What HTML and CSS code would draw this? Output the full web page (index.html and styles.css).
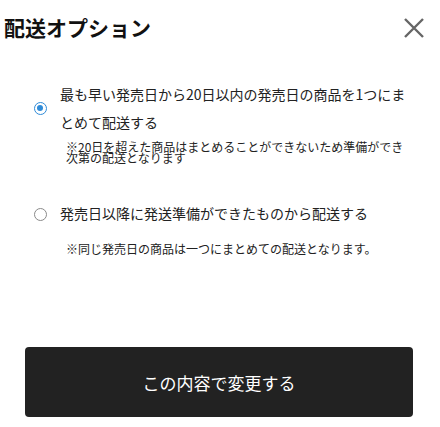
FILE: index.html
```html
<!DOCTYPE html>
<html lang="ja">
<head>
<meta charset="utf-8">
<title>配送オプション</title>
<link rel="stylesheet" href="styles.css">
</head>
<body>
<div class="modal">
  <header class="header">
    <h1 class="title">配送オプション</h1>
    <button class="close" aria-label="閉じる">
      <svg width="22" height="20" viewBox="0 0 22 20"><path d="M2 1 L20 19 M20 1 L2 19" stroke="#666" stroke-width="2.4" fill="none"/></svg>
    </button>
  </header>
  <div class="options">
    <div class="option first">
      <span class="radio checked"></span>
      <p class="label">最も早い発売日から20日以内の発売日の商品を1つにまとめて配送する</p>
      <p class="note tight">※20日を超えた商品はまとめることができないため準備ができ次第の配送となります</p>
    </div>
    <div class="option second">
      <span class="radio"></span>
      <p class="label">発売日以降に発送準備ができたものから配送する</p>
      <p class="note spaced">※同じ発売日の商品は一つにまとめての配送となります。</p>
    </div>
  </div>
  <div class="actions">
    <button class="submit">この内容で変更する</button>
  </div>
</div>
</body>
</html>
```
FILE: styles.css
```css
* { box-sizing: border-box; }
html, body { margin: 0; padding: 0; background: #fff; }
body {
  font-family: "Noto Sans CJK JP", "Noto Sans", sans-serif;
  color: #222;
}
.modal {
  width: 440px;
  height: 427px;
  display: flex;
  flex-direction: column;
  overflow: hidden;
}
.header {
  height: 55px;
  flex: none;
  display: flex;
  align-items: center;
  justify-content: space-between;
  padding: 0 15px 0 4px;
}
.title {
  margin: 0;
  font-size: 21px;
  line-height: 29px;
  font-weight: 700;
  color: #111;
}
.close {
  border: 0;
  background: none;
  padding: 0;
  width: 22px;
  height: 20px;
  margin-top: 1px;
  display: flex;
}
.options {
  padding: 25px 28px 0 0;
}
.option {
  display: grid;
  grid-template-columns: 60px 1fr;
}
.second { margin-top: 36px; }
.radio {
  grid-row: 1;
  grid-column: 1;
  align-self: center;
  justify-self: start;
  margin-left: 34px;
  width: 13px;
  height: 13px;
  border-radius: 50%;
  border: 1.5px solid #8a8a8a;
  background: #fff;
  position: relative;
}
.second .radio { margin-top: 2px; }
.radio.checked { border-color: #2f8bd8; }
.radio.checked::after {
  content: "";
  position: absolute;
  left: 2px; top: 2px;
  width: 6px; height: 6px;
  border-radius: 50%;
  background: #2f8bd8;
}
.label {
  grid-row: 1;
  grid-column: 2;
  margin: 0;
  font-size: 14px;
  line-height: 28px;
}
.note {
  grid-row: 2;
  grid-column: 2;
  margin: 0;
  padding-left: 6px;
  font-size: 12px;
  line-height: 11px;
}
.tight { margin-top: 5px; }
.spaced { margin-top: 16px; }
.actions {
  margin-top: auto;
  padding: 0 27px 10px 25px;
}
.submit {
  display: block;
  width: 100%;
  height: 70px;
  border: 0;
  border-radius: 4px;
  background: #222;
  color: #fff;
  font-family: "Noto Sans CJK JP", "Noto Sans", sans-serif;
  font-size: 17px;
  padding: 0;
}
```
